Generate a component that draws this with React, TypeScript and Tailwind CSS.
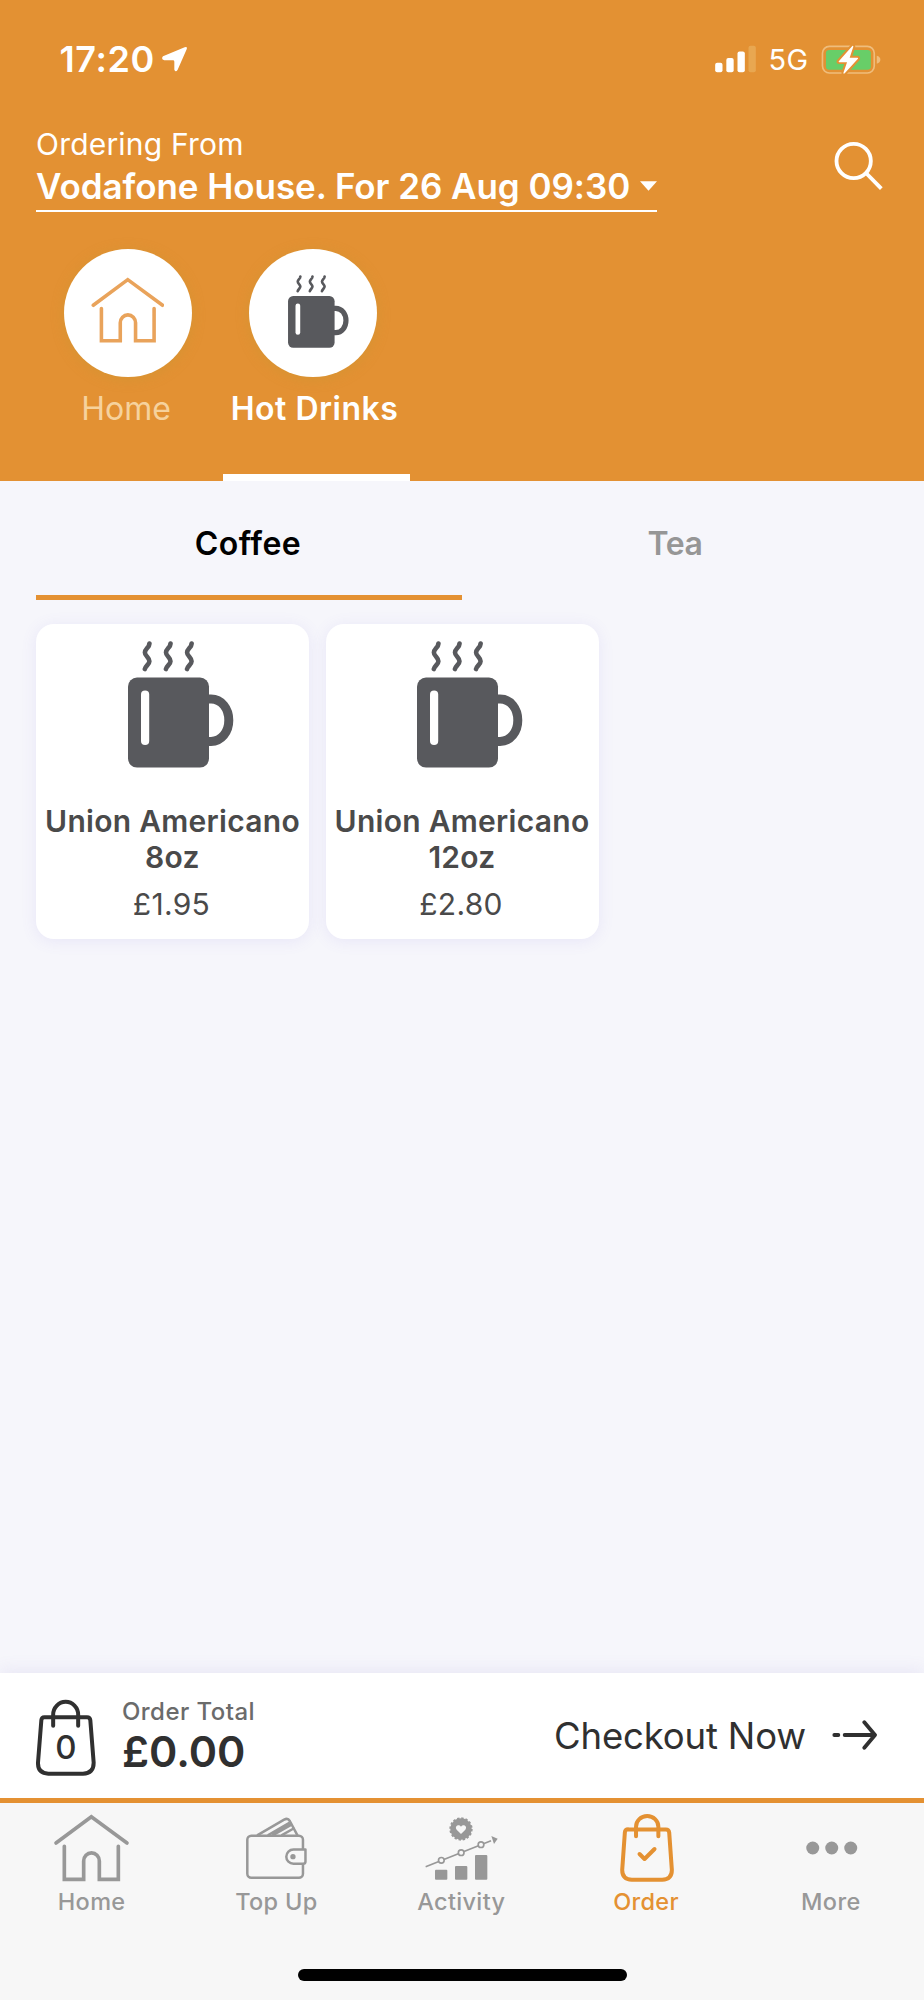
import type { ReactNode } from "react";

function MugIcon({ className }: { className: string }) {
  return (
    <svg viewBox="128 640 106 127" className={className} fill="none" aria-hidden="true">
      <g stroke="#58595d" strokeWidth="4.6" strokeLinecap="round" strokeLinejoin="round">
        {[0, 21.1, 42.2].map((dx) => (
          <path
            key={dx}
            transform={`translate(${dx} 0)`}
            d="M149.400 642.6 L148.8 645 C147.300 647.3 144.900 648.8 144.900 651.4 C144.900 655.2 149.400 656.4 149.400 660.2 C149.400 663.3 145.4 665 144.8 668.1"
          />
        ))}
      </g>
      <path d="M208 698 h3 c10.5 0 17.8 9.6 17.8 21.2 c0 11.600 -7.3 21.2 -17.8 21.2 h-3" stroke="#58595d" strokeWidth="9" />
      <rect x="128" y="676.6" width="81" height="90" rx="9" fill="#58595d" />
      <rect x="141" y="689.5" width="8.2" height="54.600" rx="4.1" fill="#fff" />
    </svg>
  );
}

function HouseShape() {
  return (
    <g fill="none" stroke="currentColor" strokeWidth="11" strokeLinecap="round">
      <path d="M169 159 L275 80 L382 159" />
      <path d="M194 169 V268 H252 V213 a23.500 24.500 0 0 1 47 0 V268 H356 V169" />
    </g>
  );
}

function NavItem({ label, view, active, children }: { label: string; view: string; active?: boolean; children: ReactNode }) {
  return (
    <a className={`flex flex-1 flex-col items-center ${active ? "text-[#e49132]" : "text-[#989898]"}`}>
      <svg viewBox={view} className="h-[84px] w-[100px]" aria-hidden="true">
        {children}
      </svg>
      <span className="mt-[1px] mr-[1.5px] text-[23.5px] leading-7 font-medium tracking-[0.35px]">{label}</span>
    </a>
  );
}

function ProductCard({ name, size, price }: { name: string; size: string; price: string }) {
  return (
    <article className="flex h-[315px] w-[273px] flex-col items-center rounded-[18px] bg-white pt-[17px] text-[30px] text-[#4a4a4a] shadow-[0_2px_16px_rgba(120,100,220,0.11)]">
      <MugIcon className="ml-[16px] h-[127px] w-[106px]" />
      <h3 className="mt-[35px] text-center leading-[36.5px] font-semibold tracking-[0.28px]">
        {name}
        <br />
        {size}
      </h3>
      <p className="mt-[10px] mr-[2px] leading-9 tracking-[0.3px]">{price}</p>
    </article>
  );
}

export default function App() {
  return (
    <div className="flex h-[2000px] w-[924px] flex-col overflow-hidden bg-[#f6f6fb] font-['Inter',sans-serif]">
      <header className="flex h-[481px] shrink-0 flex-col bg-[#e39133] text-white">
        <div className="flex h-[118px] items-center justify-between pr-[43px] pl-[59.5px]">
          <div className="flex items-center">
            <span className="text-[36px] leading-[44px] font-semibold tracking-[0.6px]">17:20</span>
            <svg viewBox="484 135 81 81" className="ml-[6.5px] h-[27px] w-[27px]" aria-hidden="true">
              <path fill="#fff" d="M490 166 L555 139 q9 -3 6 6 L534 206 q-6 10 -10 0 V182 q0 -4 -4 -4 H494 q-11 -4 -4 -12z" />
            </svg>
          </div>
          <div className="flex items-center">
            <svg viewBox="762 134 122 84" className="h-[28px] w-[41px]" aria-hidden="true">
              <g fill="#fff">
                <rect x="762" y="187" width="22" height="29" rx="6" />
                <rect x="795.500" y="173" width="22" height="43" rx="6" />
                <rect x="829" y="153.500" width="22" height="62.500" rx="6" />
                <rect x="862" y="136" width="22" height="80" rx="6" fill="#e8a751" />
              </g>
            </svg>
            <span className="ml-3 pt-[2px] text-[29px] leading-9 tracking-[0.4px]">5G</span>
            <svg viewBox="1077 128 180 94" className="ml-[12.5px] h-[31px] w-[60px]" aria-hidden="true">
              <rect x="1080.500" y="135" width="157" height="81" rx="21" fill="none" stroke="#efbd7c" strokeWidth="5" />
              <rect x="1091" y="146" width="136" height="60" rx="10" fill="#68ce68" />
              <path d="M1245 164 q11 3 11 12 t-11 12z" fill="#efbd7c" />
              <path
                d="M1171 134 L1130 180 q-2 3 2 3 H1155 L1144 215 q0 5 4 2 L1188 173 q2 -3 -2 -3 H1163 L1174 136 q0 -4 -3 -2z"
                fill="#fff"
                stroke="#e39133"
                strokeWidth="12"
                paintOrder="stroke"
                strokeLinejoin="round"
              />
            </svg>
          </div>
        </div>

        <div className="flex h-[95px] justify-between pr-[41px] pl-9">
          <div>
            <p className="mt-2 text-[30px] leading-9 tracking-[0.2px]">Ordering From</p>
            <button className="flex h-[50px] w-[621px] items-center border-b-2 border-white pb-px text-[35px] font-semibold tracking-[-0.05px] whitespace-nowrap">
              <span className="leading-[44px]">Vodafone House. For 26 Aug 09:30</span>
              <svg viewBox="0 0 17 10" className="ml-auto h-[10px] w-[17px] shrink-0" aria-hidden="true">
                <path d="M0 .3 H17 L8.500 9.800z" fill="#fff" />
              </svg>
            </button>
          </div>
          <svg viewBox="1116 423 147 147" className="mt-[23px] h-[49px] w-[49px]" fill="none" stroke="#fff" strokeWidth="11.500" aria-hidden="true">
            <circle cx="1175" cy="483" r="51.500" />
            <path d="M1212 519 L1258 566" />
          </svg>
        </div>

        <nav className="flex h-[268px] pl-9">
          <a className="flex w-[187px] flex-col items-center pt-9">
            <span className="mr-[4px] flex size-32 items-center justify-center rounded-full bg-white pb-[6px] text-[#e9a35b] shadow-[0_2px_12px_rgba(205,150,50,0.6)]">
              <svg viewBox="162 72 226 206" className="h-[67px] w-[73.5px]" aria-hidden="true">
                <HouseShape />
              </svg>
            </span>
            <span className="mt-3 mr-[7px] text-[32px] leading-10 text-[#f6d29d]">Home</span>
          </a>
          <a className="flex w-[187px] flex-col items-center border-b-[7px] border-white pt-9">
            <span className="mr-[8px] flex size-32 justify-center rounded-full bg-white shadow-[0_2px_12px_rgba(205,150,50,0.6)]">
              <MugIcon className="mt-[25.5px] ml-[11px] h-[73px] w-[61px]" />
            </span>
            <span className="mt-3 mr-[4px] text-[32px] leading-10 font-semibold tracking-[0.5px]">Hot Drinks</span>
          </a>
        </nav>
      </header>

      <main className="flex flex-1 flex-col px-9">
        <div className="flex h-[119px] text-center text-[32px] leading-10">
          <button className="w-1/2 border-b-[5px] border-[#e49132] pt-[12px] pr-[2px] font-semibold tracking-[0.44px] text-black">Coffee</button>
          <button className="w-1/2 border-b-[5px] border-transparent pt-[12px] font-semibold tracking-[-0.4px] text-[#969696]">Tea</button>
        </div>
        <section className="mt-[23.5px] flex gap-[16.5px]">
          <ProductCard name="Union Americano" size="8oz" price="£1.95" />
          <ProductCard name="Union Americano" size="12oz" price="£2.80" />
        </section>
      </main>

      <section className="flex h-[130px] shrink-0 items-start justify-between border-b-[5px] border-[#e49132] bg-white pr-[47.5px] pl-9 text-[#303030] shadow-[0_-3px_16px_rgba(120,100,200,0.1)]">
        <div className="flex">
          <div className="relative mt-[26px] h-[78px] w-[60px]">
            <svg viewBox="108 147 180 234" className="h-[78px] w-[60px]" fill="none" stroke="#303030" strokeWidth="12" strokeLinecap="round" aria-hidden="true">
              <path d="M133 202 H261 q9 0 10 9 L281 338 q0 32 -32 33 H145 q-32 -1 -31 -33 L124 211 q1 -9 9 -9z" />
              <path d="M159.500 227 V194 a37.500 38.500 0 0 1 75 0 V227" />
            </svg>
            <span className="absolute inset-x-0 top-[27.5px] text-center text-[33px] leading-10 font-medium">0</span>
          </div>
          <div className="ml-[26px] pt-[24px]">
            <p className="text-[24px] leading-[30px] font-medium tracking-[0.45px] text-[#6b6b6b]">Order Total</p>
            <p className="mt-[-1.5px] text-[43px] leading-[50px] font-semibold">£0.00</p>
          </div>
        </div>
        <button className="flex items-center pt-[39px]">
          <span className="text-[36.5px] leading-[48px] tracking-[-0.15px]">Checkout Now</span>
          <svg viewBox="1109 206 135 96" className="mt-[-3px] ml-[25.5px] h-[32px] w-[45px]" fill="none" stroke="#303030" strokeWidth="11.500" strokeLinecap="round" strokeLinejoin="round" aria-hidden="true">
            <path d="M1116 254 H1128 M1147 254 H1237 M1206 216 L1238 254 L1206 292" />
          </svg>
        </button>
      </section>

      <footer className="flex h-[197px] shrink-0 flex-col bg-[#f7f7f7]">
        <nav className="flex">
          <NavItem label="Home" view="127 39 300 252">
            <HouseShape />
          </NavItem>
          <NavItem label="Top Up" view="681.6 39 300 252">
            <g fill="none" stroke="currentColor" strokeWidth="7.500" strokeLinejoin="round">
              <path d="M772 136 L853 89 q11 -6 17 4 L893 136" />
              <path d="M804 136 L870 98 M818 136 L875 104 M845 136 L884 114" />
              <rect x="742.500" y="137" width="167" height="126" rx="12" />
              <path d="M912 178.500 H881 a21.500 21.500 0 0 0 0 43 H910 q7 0 7 -7 V178.500z" fill="#f7f7f7" />
            </g>
            <circle cx="879.500" cy="200" r="8" fill="currentColor" />
          </NavItem>
          <NavItem label="Activity" view="-9 -6 300 252">
            <g fill="currentColor">
              <rect x="60" y="194" width="37" height="30" rx="3" />
              <rect x="120" y="183" width="37" height="41" rx="3" />
              <rect x="180" y="150" width="37" height="74" rx="3" />
              <path d="M229 93 L248 101 L237 117z" />
              <circle cx="138" cy="72" r="32" />
            </g>
            <circle cx="138" cy="72" r="32" fill="none" stroke="currentColor" strokeWidth="6" strokeDasharray="7 5.56" />
            <path d="M138 87 L125 74 C118 66 129 55 138 65 C147 55 158 66 151 74z" fill="#f7f7f7" />
            <path d="M32 185 L228 107" stroke="currentColor" strokeWidth="5" />
            <g fill="#f7f7f7" stroke="currentColor" strokeWidth="5">
              <circle cx="79" cy="166" r="8.500" />
              <circle cx="138.500" cy="143" r="8.500" />
              <circle cx="198" cy="119" r="8.500" />
            </g>
          </NavItem>
          <NavItem label="Order" view="404.400 39 300 252" active>
            <g fill="none" stroke="currentColor" strokeWidth="12" strokeLinecap="round" strokeLinejoin="round">
              <path d="M498 118.500 H611 q9 0 10 9 L629 240 q0 28 -29 29.500 H509 q-29 -1.500 -29 -29.500 L488 127 q1 -9 10 -9z" />
              <path d="M521.500 139 V110 a33.500 32 0 0 1 67 0 V139" />
              <path d="M532 192 L547 207 L577 177" />
            </g>
          </NavItem>
          <NavItem label="More" view="958.800 39 300 252">
            <g fill="currentColor">
              <circle cx="1051" cy="174" r="19.500" />
              <circle cx="1108" cy="174" r="19.500" />
              <circle cx="1165" cy="174" r="19.500" />
            </g>
          </NavItem>
        </nav>
        <div className="mt-[53px] h-3 w-[329px] self-center rounded-full bg-black" />
      </footer>
    </div>
  );
}
